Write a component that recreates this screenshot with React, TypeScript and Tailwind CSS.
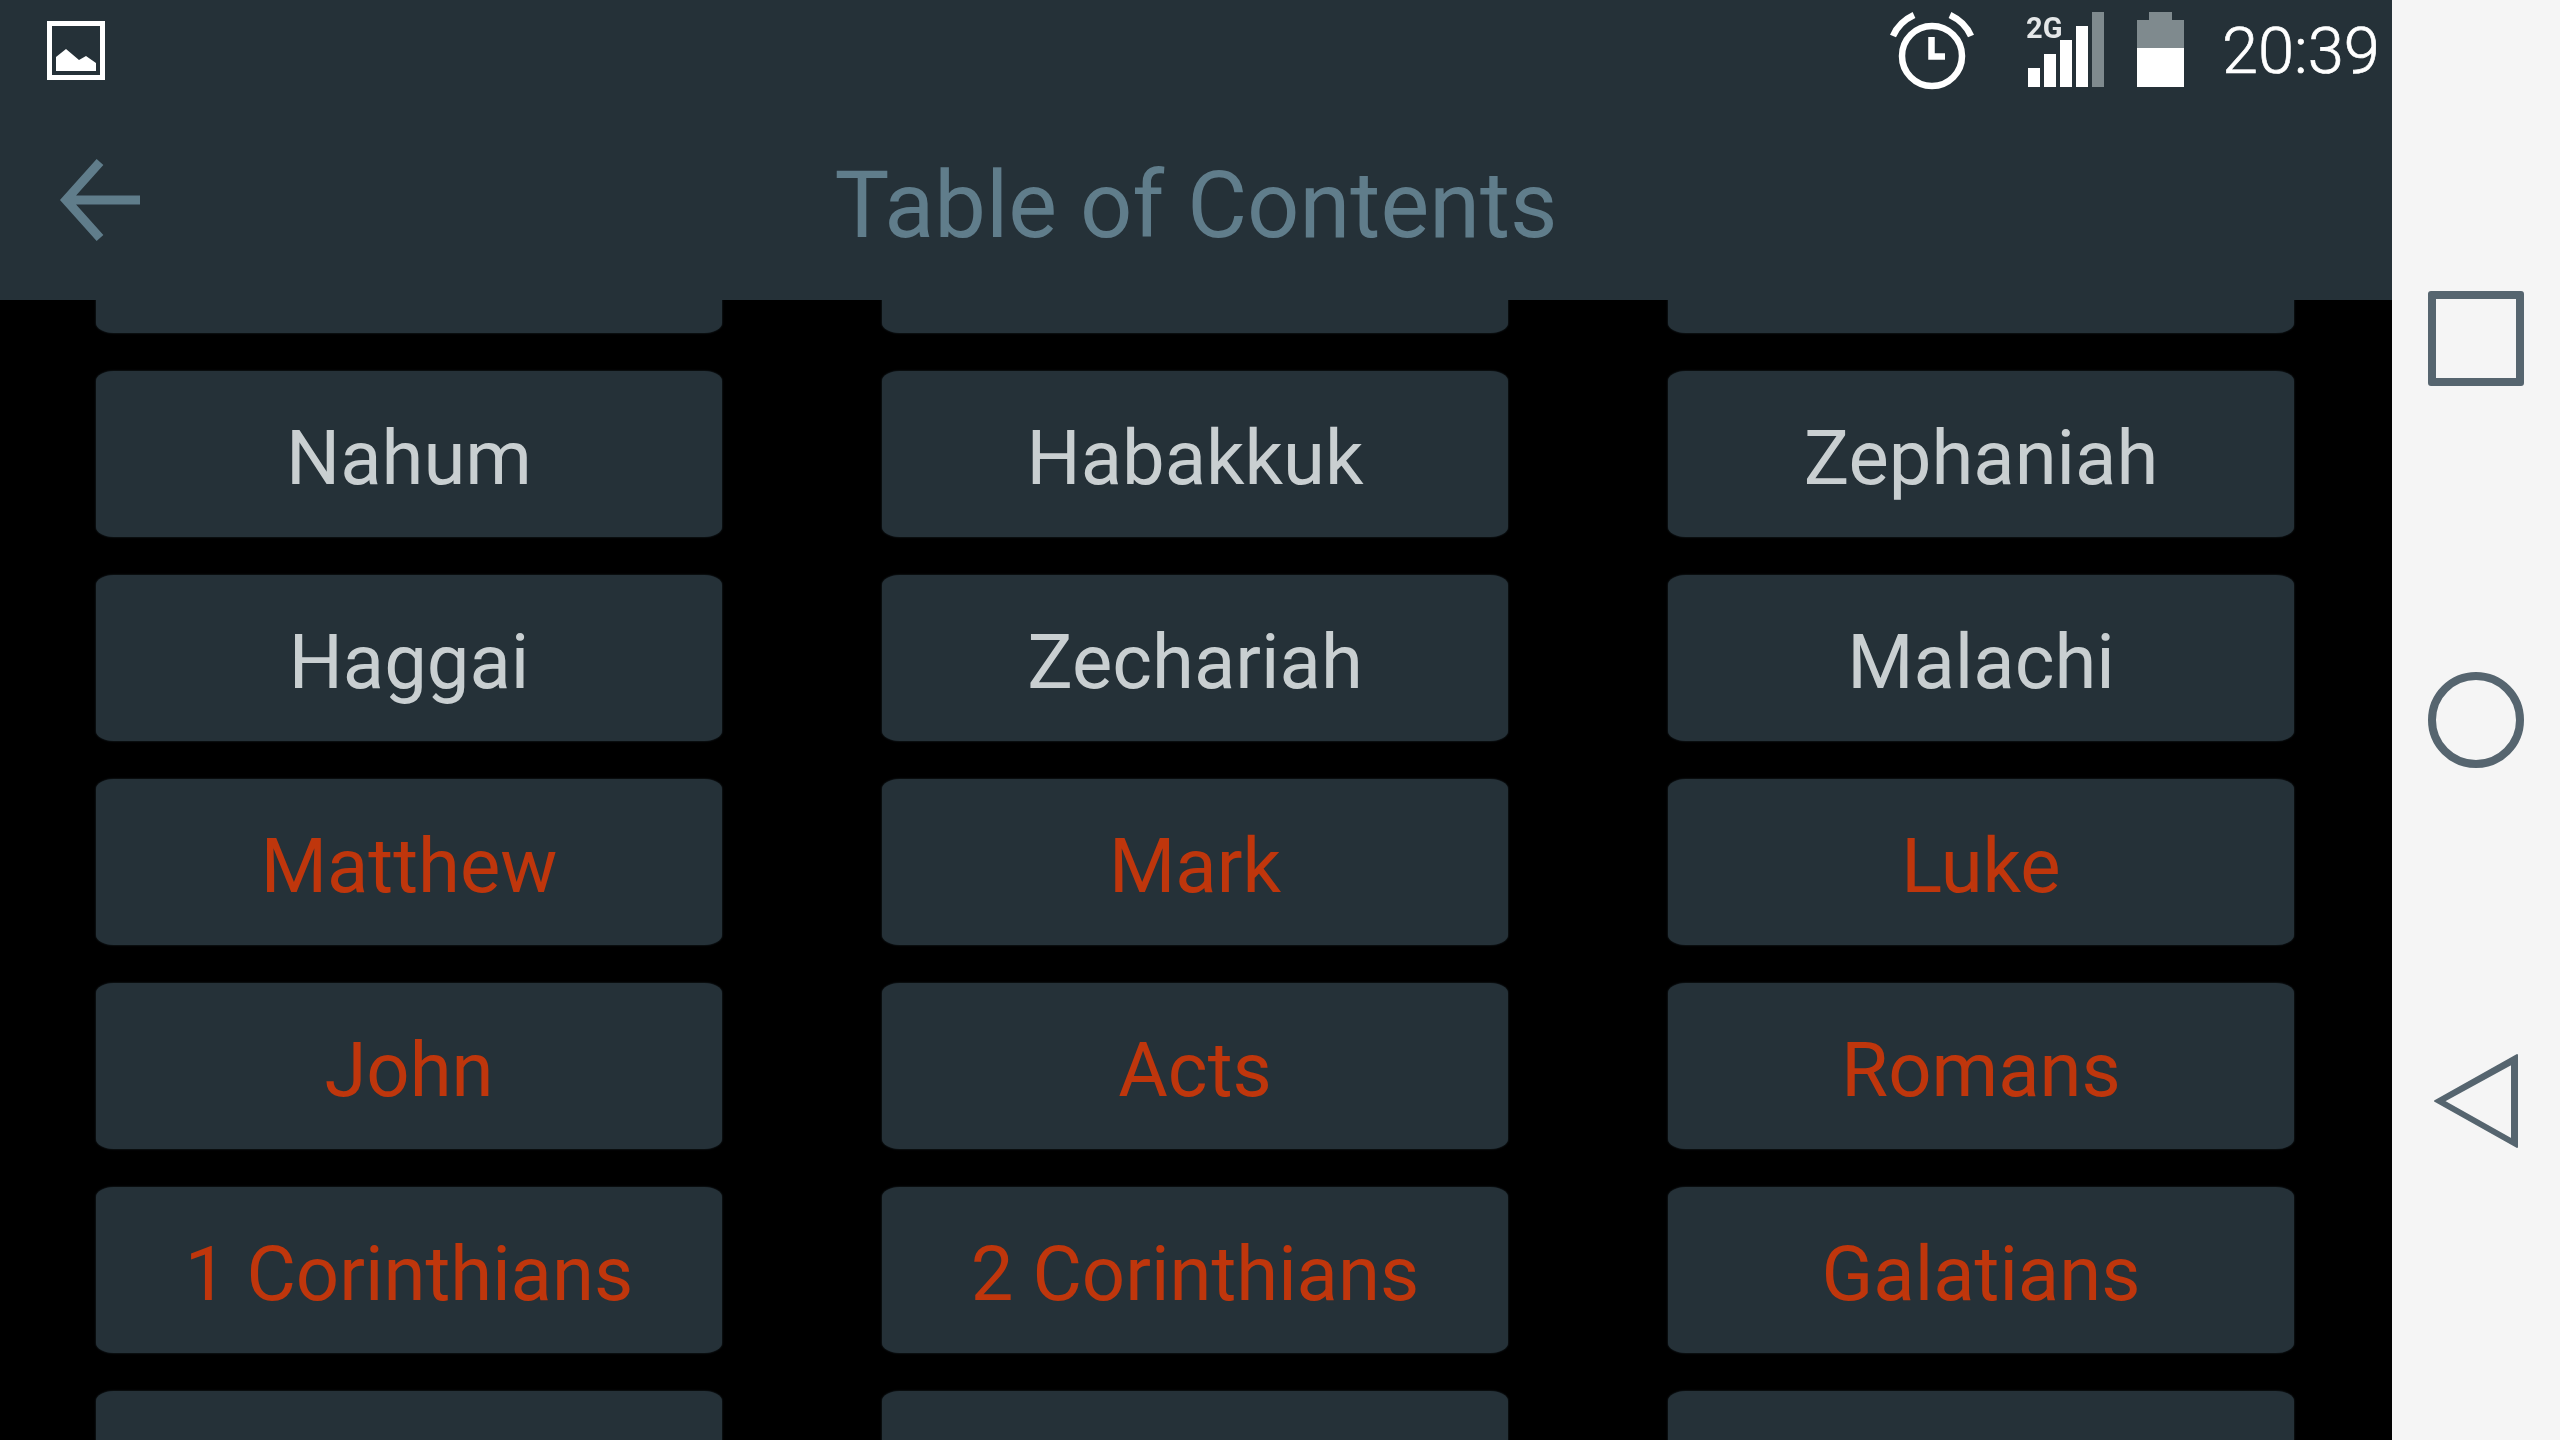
const oldTestament = ['', '', '', 'Nahum', 'Habakkuk', 'Zephaniah', 'Haggai', 'Zechariah', 'Malachi'];
const newTestament = [
  'Matthew',
  'Mark',
  'Luke',
  'John',
  'Acts',
  'Romans',
  '1 Corinthians',
  '2 Corinthians',
  'Galatians',
  '',
  '',
  '',
];

function BookButton({ title, isNew }: { title: string; isNew?: boolean }) {
  return (
    <div
      className={`h-[166px] rounded-[18px/10px] bg-[#253138] shadow-[0_0_2px_#253138] flex items-center justify-center pt-[8px] text-[76px] leading-none ${
        isNew ? 'text-[#bf360c]' : 'text-[#c9cfd1]'
      }`}
    >
      {title}
    </div>
  );
}

function StatusBar() {
  return (
    <div className="h-[100px] flex items-start pl-[47px] pr-[15px]">
      <svg className="mt-[21px]" width="58" height="59" viewBox="0 0 58 59">
        <path d="M2.5 2.5H55.5V56.5H2.5Z" fill="none" stroke="#fff" strokeWidth="5" />
        <path d="M9 50V36L19 28L32 39L39 35L49 42V50Z" fill="#fff" />
      </svg>
      <svg className="ml-auto mt-[12px]" width="84" height="78" viewBox="0 0 84 78">
        <circle cx="42" cy="44" r="30" fill="none" stroke="#fff" strokeWidth="6.5" />
        <path d="M41.5 25V44.5H55" fill="none" stroke="#fff" strokeWidth="6.5" />
        <path d="M3 24Q9 10 24 3" fill="none" stroke="#fff" strokeWidth="6.5" />
        <path d="M60 3Q75 10 81 24" fill="none" stroke="#fff" strokeWidth="6.5" />
      </svg>
      <div className="ml-[54px] mt-[12px] relative w-[76px] h-[75px]">
        <div className="absolute left-[-2px] top-[0px] text-[29px] leading-[32px] font-bold text-[#e4e7e8] blur-[0.5px]">
          2G
        </div>
        <div className="h-full flex items-end gap-[4px]">
          <div className="w-[12px] h-[19px] bg-white" />
          <div className="w-[12px] h-[33px] bg-white" />
          <div className="w-[12px] h-[47px] bg-white" />
          <div className="w-[12px] h-[61px] bg-white" />
          <div className="w-[12px] h-[75px] bg-[#7f8a8e]" />
        </div>
      </div>
      <div className="ml-[33px] mt-[12px] w-[47px] flex flex-col items-center">
        <div className="w-[23px] h-[8px] bg-[#7f8a8e]" />
        <div className="w-full h-[28px] bg-[#7f8a8e]" />
        <div className="w-full h-[39px] bg-white" />
      </div>
      <div className="ml-[38px] mt-[18px] w-[155px] text-center whitespace-nowrap text-[65px] leading-[66px] font-light text-white [-webkit-text-stroke:0.7px_#fff]">
        20:39
      </div>
    </div>
  );
}

export default function App() {
  return (
    <div className="w-[2560px] h-[1440px] flex overflow-hidden bg-black font-['Roboto',sans-serif]">
      <main className="w-[2392px] flex flex-col">
        <header className="h-[300px] shrink-0 bg-[#253138] relative z-10">
          <StatusBar />
          <div className="h-[200px] flex items-center">
            <div className="w-[200px] pl-[56px]">
              <svg width="88" height="84" viewBox="0 0 88 84">
                <path d="M84 42H10M44 4L10 42L44 80" fill="none" stroke="#607d8b" strokeWidth="9" />
              </svg>
            </div>
            <h1 className="flex-1 mt-[12px] text-center text-[92px] leading-none font-normal text-[#607d8b]">
              Table of Contents
            </h1>
            <div className="w-[200px]" />
          </div>
        </header>
        <div className="flex-1 overflow-hidden pl-[96px] pr-[98px]">
          <div className="-mt-[133px] grid grid-cols-3 gap-x-[160px] gap-y-[38px]">
            {oldTestament.map((title, i) => (
              <BookButton key={i} title={title} />
            ))}
            {newTestament.map((title, i) => (
              <BookButton key={i} title={title} isNew />
            ))}
          </div>
        </div>
      </main>
      <aside className="w-[168px] bg-[#f5f5f5] flex flex-col items-center pt-[291px] gap-[286px]">
        <div className="w-[96px] h-[95px] rounded-[3px] border-[8px] border-[#56656f]" />
        <div className="w-[96px] h-[96px] rounded-full border-[8px] border-[#56656f]" />
        <svg className="-mt-[1px]" width="96" height="96" viewBox="0 0 96 96">
          <path
            d="M7 48L89 2V94ZM15.5 48L84 86.5V10.5Z"
            fill="#56656f"
            fillRule="evenodd"
            stroke="#56656f"
            strokeWidth="2"
            strokeLinejoin="round"
          />
        </svg>
      </aside>
    </div>
  );
}
